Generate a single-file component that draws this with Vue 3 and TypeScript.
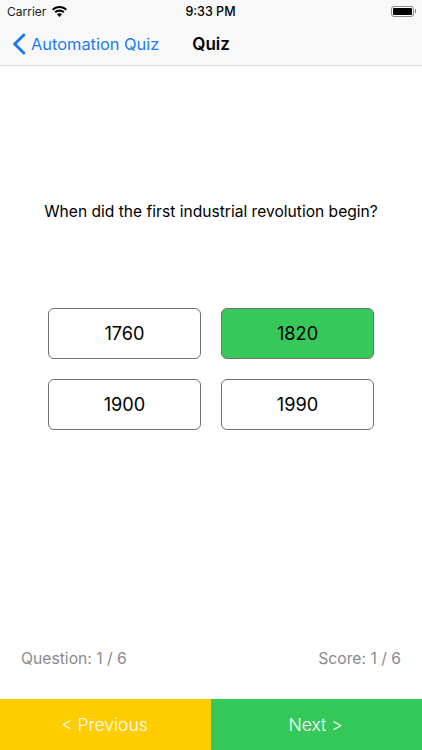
<script setup lang="ts">
interface Answer { label: string; correct?: boolean }
const answers: Answer[] = [
  { label: '1760' },
  { label: '1820', correct: true },
  { label: '1900' },
  { label: '1990' },
]
</script>

<template>
  <div class="screen">
    <header class="chrome">
      <div class="status">
        <div class="status-left">
          <span class="carrier">Carrier</span>
          <svg class="wifi" width="15" height="11" viewBox="0 0 15 11">
            <path d="M7.5 0C4.6 0 2 1.1 0 3l1.4 1.5C3 3 5.1 2.1 7.5 2.1S12 3 13.6 4.5L15 3C13 1.1 10.4 0 7.5 0z" fill="#000"/>
            <path d="M7.5 3.6c-1.9 0-3.7.7-5 2L3.9 7.1c1-.9 2.2-1.4 3.6-1.4s2.6.5 3.6 1.4l1.4-1.5c-1.3-1.3-3.1-2-5-2z" fill="#000"/>
            <path d="M7.5 7.2c-1 0-1.9.4-2.5 1l2.5 2.8L10 8.2c-.6-.6-1.5-1-2.5-1z" fill="#000"/>
          </svg>
        </div>
        <span class="clock">9:33 PM</span>
        <div class="battery"><span class="battery-fill"></span><span class="battery-cap"></span></div>
      </div>
      <nav class="navbar">
        <svg class="chevron" width="14" height="22" viewBox="0 0 14 22">
          <path d="M11.8 2 2.7 11l9.1 9" fill="none" stroke="#1b7cf0" stroke-width="3" stroke-linecap="round" stroke-linejoin="round"/>
        </svg>
        <span class="back">Automation Quiz</span>
        <span class="title">Quiz</span>
      </nav>
    </header>

    <main class="content">
      <p class="question">When did the first industrial revolution begin?</p>
      <div class="answers">
        <button v-for="a in answers" :key="a.label" class="answer" :class="{ correct: a.correct }">{{ a.label }}</button>
      </div>
    </main>

    <div class="progress">
      <span>Question: 1 / 6</span>
      <span>Score: 1 / 6</span>
    </div>

    <footer class="footer">
      <button class="foot prev">&lt; Previous</button>
      <button class="foot next">Next &gt;</button>
    </footer>
  </div>
</template>

<style>
html, body { margin: 0; background: #fff; }
</style>

<style scoped>
.screen {
  width: 422px;
  height: 750px;
  display: flex;
  flex-direction: column;
  background: #fff;
  font-family: Inter, "Liberation Sans", sans-serif;
  color: #000;
  overflow: hidden;
}
.chrome {
  height: 66px;
  box-sizing: border-box;
  background: #f8f8f8;
  border-bottom: 1px solid #dcdcdc;
  display: flex;
  flex-direction: column;
}
.status {
  height: 22px;
  display: grid;
  grid-template-columns: 1fr auto 1fr;
  align-items: center;
  padding: 0 6px 0 7px;
  font-size: 12px;
}
.status-left { display: flex; align-items: center; gap: 6px; }
.carrier { color: #222; }
.clock { font-weight: 500; font-size: 12.5px; margin-right: 2px; }
.battery {
  justify-self: end;
  display: flex;
  align-items: center;
  gap: 1px;
}
.battery-fill {
  width: 19px;
  height: 7px;
  background: #000;
  border: 1px solid #fff;
  outline: 1px solid #8a8a8a;
  border-radius: 2px;
  margin-right: 1px;
}
.battery-cap { width: 1px; height: 4px; background: #888; }
.navbar {
  flex: 1;
  display: flex;
  align-items: center;
  padding: 0 0 0 12px;
}
.chevron { margin-right: 5px; }
.back { color: #1b7cf0; font-size: 16.4px; }
.title { margin-left: 33px; font-size: 17px; font-weight: 600; }
.content {
  flex: 1;
  display: flex;
  flex-direction: column;
  align-items: center;
}
.question {
  margin: 136px 0 0;
  font-size: 15.6px;
  line-height: 20px;
}
.answers {
  margin-top: 86px;
  display: grid;
  grid-template-columns: 153px 153px;
  grid-auto-rows: 51px;
  gap: 20px;
}
.answer {
  border: 1px solid #707070;
  border-radius: 6px;
  background: #fff;
  font: inherit;
  font-size: 18.2px;
  color: #000;
  padding: 0 0 2px;
}
.answer.correct { background: #37c85c; }
.progress {
  display: flex;
  justify-content: space-between;
  padding: 1px 21px 0;
  height: 20px;
  line-height: 20px;
  font-size: 15.7px;
  color: #8a8a8e;
  margin-bottom: 30px;
}
.footer {
  height: 51px;
  display: grid;
  grid-template-columns: 1fr 1fr;
}
.foot {
  border: 0;
  padding: 0 2px 0 0;
  font: inherit;
  font-size: 17.5px;
  font-weight: 300;
  color: #fff;
}
.prev { background: #ffcc00; }
.next { background: #34c85a; }
</style>
